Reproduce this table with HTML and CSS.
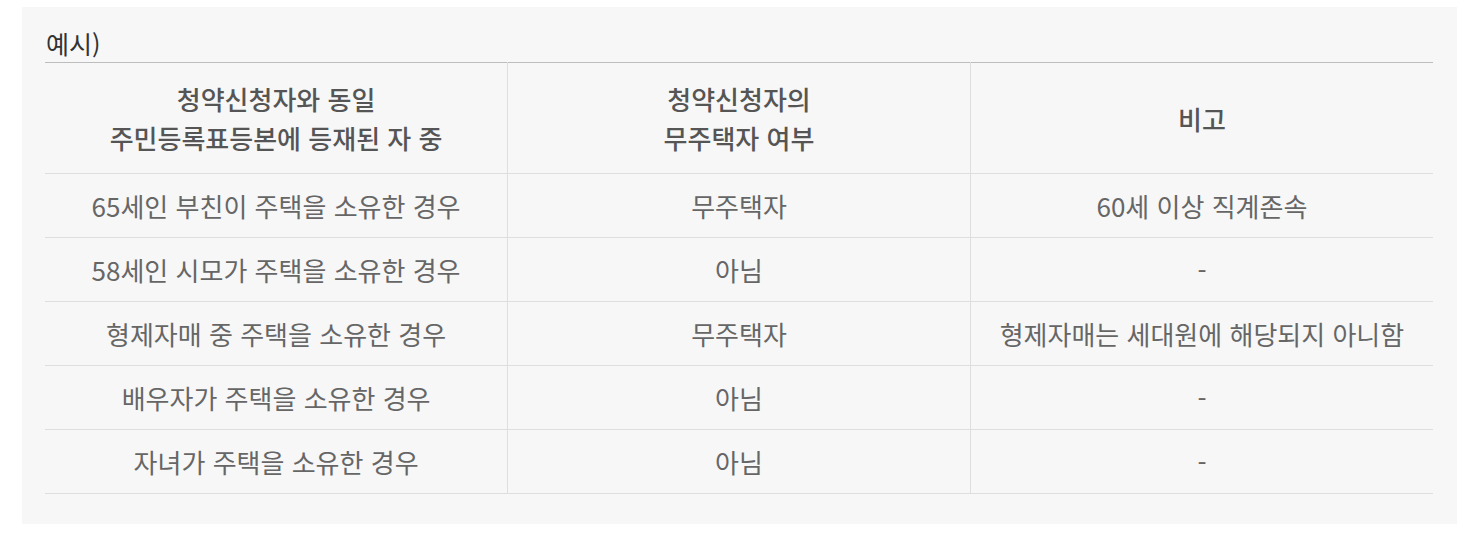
FILE: index.html
```html
<!DOCTYPE html>
<html lang="ko">
<head>
<meta charset="utf-8">
<link rel="stylesheet" href="styles.css">
</head>
<body>
<div class="box">
  <p class="caption">예시)</p>
  <table class="tbl">
    <thead>
      <tr>
        <th>청약신청자와 동일<br>주민등록표등본에 등재된 자 중</th>
        <th>청약신청자의<br>무주택자 여부</th>
        <th>비고</th>
      </tr>
    </thead>
    <tbody>
      <tr><td>65세인 부친이 주택을 소유한 경우</td><td>무주택자</td><td>60세 이상 직계존속</td></tr>
      <tr><td>58세인 시모가 주택을 소유한 경우</td><td>아님</td><td>-</td></tr>
      <tr><td>형제자매 중 주택을 소유한 경우</td><td>무주택자</td><td>형제자매는 세대원에 해당되지 아니함</td></tr>
      <tr><td>배우자가 주택을 소유한 경우</td><td>아님</td><td>-</td></tr>
      <tr><td>자녀가 주택을 소유한 경우</td><td>아님</td><td>-</td></tr>
    </tbody>
  </table>
</div>
</body>
</html>
```
FILE: styles.css
```css
html, body { margin: 0; padding: 0; background: #fff; }
body { font-family: "Noto Sans CJK KR", "Noto Sans", sans-serif; }
.box {
  margin: 7px 25px 0 22px;
  width: 1435px;
  height: 517px;
  box-sizing: border-box;
  background: #f7f7f7;
  padding: 18px 24px 0 23px;
}
.caption {
  margin: 0 0 0 1px;
  height: 37px;
  font-size: 25px;
  line-height: 37px;
  color: #333;
}
.tbl {
  width: 1388px;
  border-collapse: collapse;
  table-layout: fixed;
  border-top: 1px solid #bdbdbd;
}
.tbl th, .tbl td {
  text-align: center;
  padding: 0;
  border-bottom: 1px solid #dedede;
  border-left: 1px solid #dedede;
  color: #666;
}
.tbl th:first-child, .tbl td:first-child { border-left: 0; }
.tbl th {
  height: 110px;
  font-size: 26px;
  font-weight: 500;
  line-height: 39px;
  color: #555;
}
.tbl td {
  height: 63px;
  font-size: 26px;
  font-weight: 400;
  line-height: 30px;
  color: #666;
}
```
